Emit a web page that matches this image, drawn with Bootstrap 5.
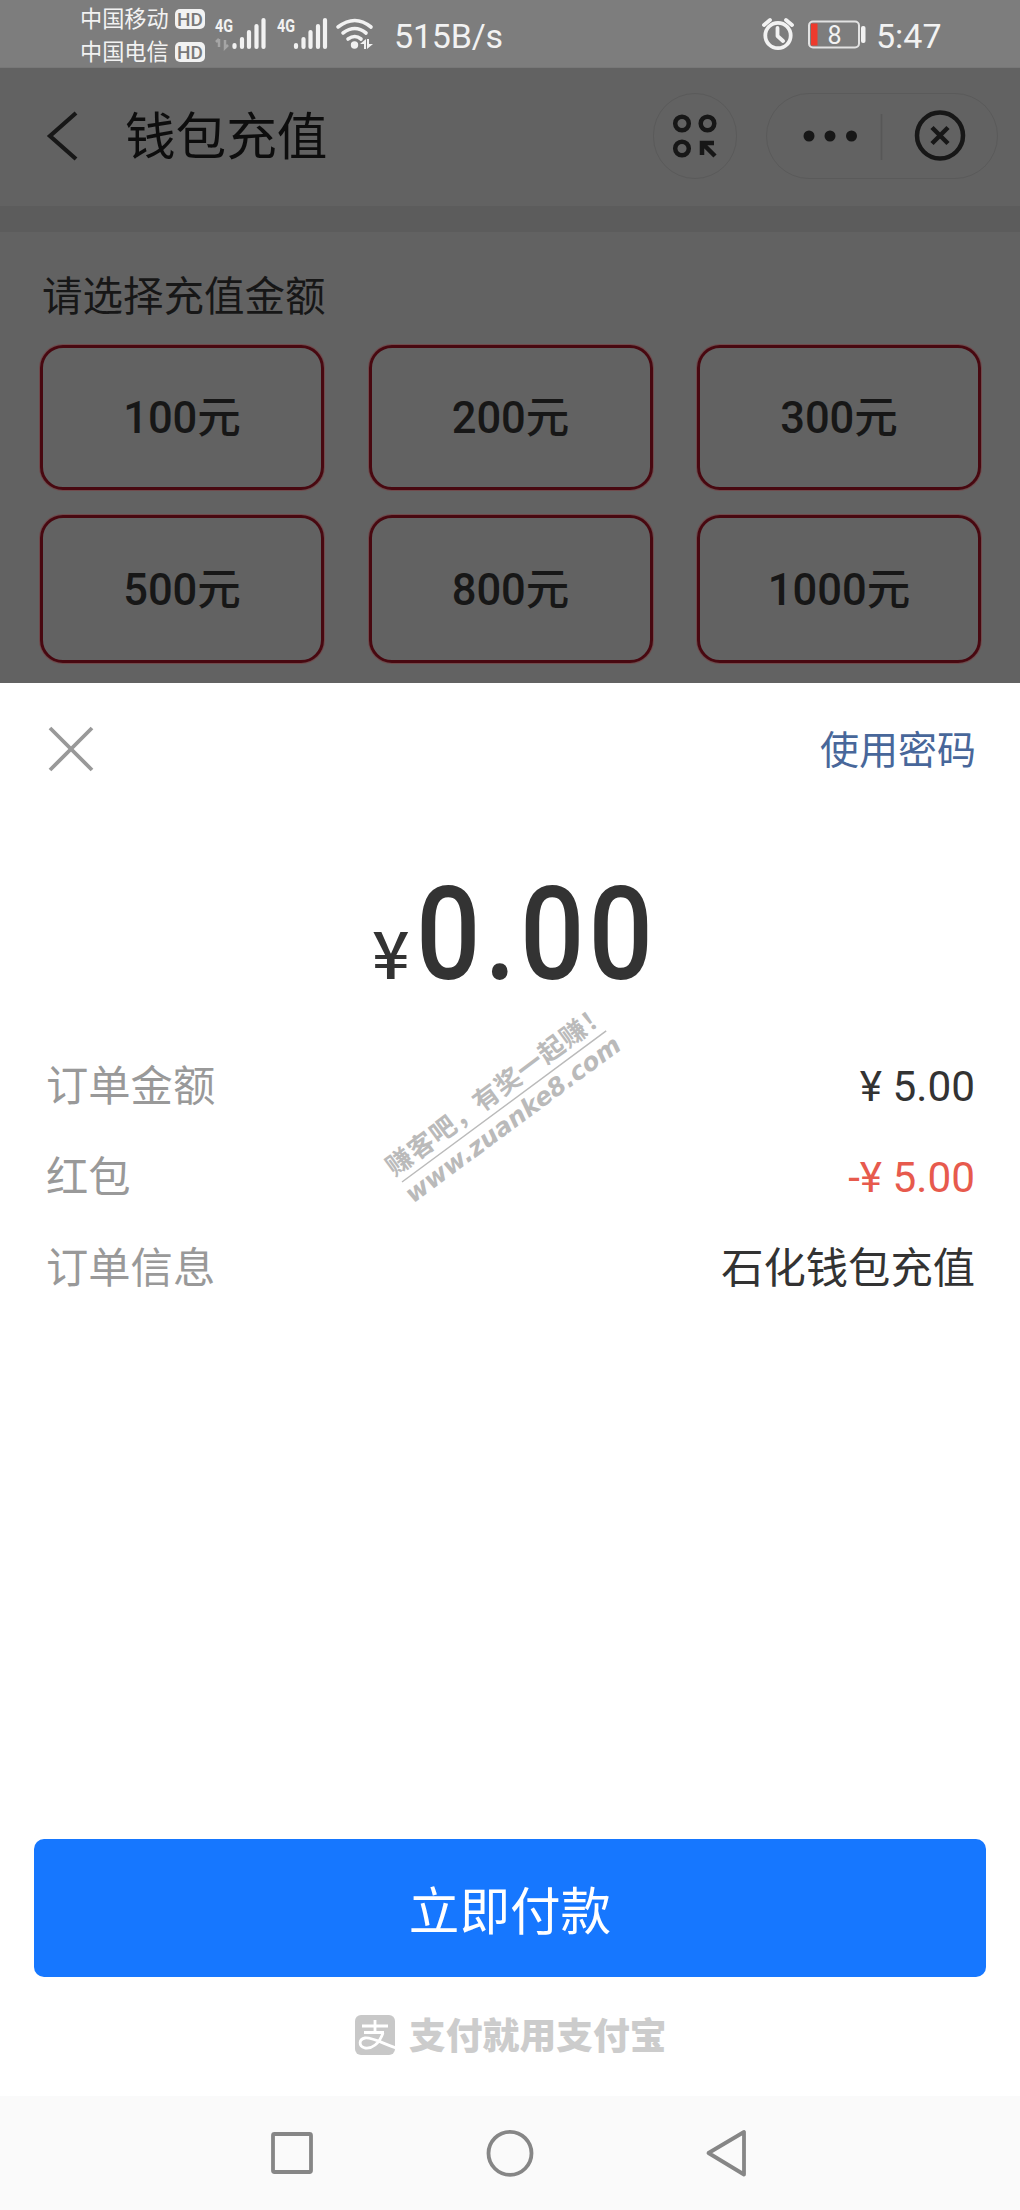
<!DOCTYPE html>
<html lang="zh-CN">
<head>
<meta charset="utf-8">
<meta name="viewport" content="width=device-width, initial-scale=1">
<title>钱包充值</title>
<link href="https://cdn.jsdelivr.net/npm/bootstrap@5.3.0/dist/css/bootstrap.min.css" rel="stylesheet">
<style>
body{width:1020px;height:2210px;overflow:hidden;background:#fff;font-family:Roboto,"Noto Sans CJK SC",sans-serif;color:#333}
svg{display:block;flex:none}
.statusbar{height:68px;background:#7d7d7d;color:#f2f2f2;padding-left:80px;border-bottom:1px solid #777}
.carriers{font-size:22.2px;line-height:33px;width:125px;padding-top:4px}
.hd{width:30px;height:20px;border-radius:5px;background:#f2f2f2;color:#777;font-size:19px;line-height:21px;font-weight:500;text-align:center}
.stat-text{font-size:34px;line-height:64px;padding-top:4px}
.net-speed{margin-left:14px;letter-spacing:-.2px}
.appbar{height:138px;background:#626262;padding:0 22px 2px 44px}
.app-title{font-size:50.6px;line-height:60px;color:#0d0d0d;margin-left:45px;padding-top:3px}
.ring{width:84px;height:86px;border:1.5px solid #5a5a5a;border-radius:43px}
.capsule{width:232px;height:86px;border:1.5px solid #5a5a5a;border-radius:43px;margin-left:29px}
.band{height:26px;background:#5c5c5c}
.amounts{height:451px;background:#626262;padding:38px 39px 0 40px}
.amounts h2{font-size:40.5px;font-weight:400;line-height:54px;color:#171717;margin:0 0 21px 2px}
.amount-grid{display:grid;grid-template-columns:repeat(3,284px);grid-template-rows:145px 148px;row-gap:25px;justify-content:space-between}
.amount-btn{border:3px solid #480810;border-radius:23px;box-shadow:0 0 0 1px #71494b;background:none;color:#171717;font-size:43.5px;font-weight:500;line-height:1;padding:3px 0 0}
.sheet{height:1413px;background:#fff;padding:0 34px}
.sheet-head{height:131px;padding:0 10px 0 14px}
.pwd{font-size:39px;color:#48679a;text-decoration:none;line-height:48px;padding-top:5px}
.total{height:242.5px;padding:56px 0 0 338px;font-weight:500}
.yen{font-family:"Noto Sans CJK SC",sans-serif;font-size:66px;line-height:1;width:44px}
.sum{font-size:129px;line-height:1;letter-spacing:4.5px;transform:scaleX(.88);transform-origin:left}
.order-row{height:91px;font-size:42.3px;line-height:60px;padding:0 11px 0 12px}
.order-row dt{font-weight:400;color:#999}
.order-row dd{margin:0;color:#333}
.order-row dd.deduct{color:#e75a4d}
.pay{height:138px;border-radius:10px;background:#1677ff;border:0;font-size:50.6px;color:#fff;padding:10px 0 0;line-height:1}
.brandline{height:119px;padding:0 0 3px 320px}
.slogan{font-size:36.8px;font-weight:900;color:#ccc;line-height:44px;padding-top:3px}
.sysnav{height:114px;background:#fafafa}
.watermark{left:350px;top:970px;pointer-events:none}
</style>
</head>
<body>
<header class="statusbar d-flex align-items-center">
  <div class="carriers">
    <div class="d-flex align-items-center justify-content-between"><span>中国移动</span><span class="hd">HD</span></div>
    <div class="d-flex align-items-center justify-content-between"><span>中国电信</span><span class="hd">HD</span></div>
  </div>
  <svg width="175" height="68" viewBox="205 0 175 68" fill="#f2f2f2">
    <g font-family="Roboto,sans-serif" font-weight="700" font-size="19">
      <text x="215" y="32" textLength="18" lengthAdjust="spacingAndGlyphs">4G</text>
      <text x="277" y="32" textLength="18" lengthAdjust="spacingAndGlyphs">4G</text>
    </g>
    <g stroke="#f2f2f2" stroke-width="4.200" stroke-linecap="round">
      <path d="M234.500 45v2M242 39v8M249 32v15M256.500 26v21M263.500 20v27"/>
      <path d="M296 45v2M303.500 39v8M310.500 32v15M318 26v21M325 20v27"/>
    </g>
    <path d="M219 39v8m-3-5 3-3M225 40v8l3-3" fill="none" stroke="#a5a5a5" stroke-width="2.500"/>
    <g fill="none" stroke="#f2f2f2" stroke-width="3.600" stroke-linecap="round">
      <path d="M338 27Q355 14 371 27"/><path d="M343 33Q355 24 366 33"/><path d="M348 39Q355 34 361 39"/>
    </g>
    <circle cx="354.500" cy="45" r="3.700"/>
    <path d="M360 44l6-5v10h-2v-5zM367 39h2v5h4l-6 5z"/>
  </svg>
  <span class="stat-text net-speed">515B/s</span>
  <svg class="ms-auto" width="115" height="68" viewBox="755 0 115 68">
    <g fill="none" stroke="#f2f2f2" stroke-width="3.800" stroke-linecap="round" stroke-linejoin="round">
      <circle cx="778" cy="35.500" r="12.700"/><path d="M777.500 28v8l5.500 5M764 25l6-5M792 25l-6-5"/>
    </g>
    <rect x="809" y="21.500" width="50" height="26" rx="4" fill="none" stroke="#e2e2e2" stroke-width="2"/>
    <rect x="811" y="23.500" width="6.500" height="22" fill="#ee3a2c"/>
    <rect x="861" y="26" width="4.500" height="17" rx="2" fill="#f2f2f2"/>
    <text x="834.500" y="43.500" text-anchor="middle" font-family="Roboto,sans-serif" font-size="25" fill="#f2f2f2">8</text>
  </svg>
  <span class="stat-text" style="width:71px;margin-left:6px;margin-right:73px">5:47</span>
</header>

<nav class="appbar d-flex align-items-center">
  <svg width="36" height="54" viewBox="44 108 36 54"><path d="M76 112 50 135 76 158" fill="none" stroke="#171717" stroke-width="4.200"/></svg>
  <div class="app-title">钱包充值</div>
  <div class="ring ms-auto d-flex align-items-center justify-content-center">
    <svg width="46" height="46" viewBox="672 112 46 46" fill="none" stroke="#171717" stroke-width="4.500">
      <circle cx="682" cy="122.500" r="6.800"/><circle cx="707.500" cy="122.500" r="6.800"/><circle cx="682" cy="147.500" r="6.800"/>
      <path d="M702 154v-12h12M702.500 142.500 715 155"/>
    </svg>
  </div>
  <div class="capsule d-flex align-items-center justify-content-center">
    <svg width="229" height="60" viewBox="767.500 105 229 60">
      <g fill="#171717"><circle cx="808.500" cy="135" r="5.500"/><circle cx="829.500" cy="135" r="5.500"/><circle cx="851" cy="135" r="5.500"/></g>
      <path d="M881 113v46" stroke="#575757" stroke-width="1.500"/>
      <circle cx="939.500" cy="134.500" r="23" fill="none" stroke="#171717" stroke-width="4.500"/>
      <path d="M931.500 126.500l16 16m0-16-16 16" stroke="#171717" stroke-width="4.500"/>
    </svg>
  </div>
</nav>
<div class="band"></div>

<main>
  <section class="amounts">
    <h2>请选择充值金额</h2>
    <div class="amount-grid">
      <button class="amount-btn">100元</button>
      <button class="amount-btn">200元</button>
      <button class="amount-btn">300元</button>
      <button class="amount-btn">500元</button>
      <button class="amount-btn">800元</button>
      <button class="amount-btn">1000元</button>
    </div>
  </section>

  <section class="sheet d-flex flex-column">
    <div class="sheet-head d-flex align-items-center justify-content-between">
      <svg width="46" height="46" viewBox="0 0 46 46"><path d="M2 2 44 44M44 2 2 44" stroke="#999" stroke-width="3.800"/></svg>
      <a href="#" class="pwd">使用密码</a>
    </div>
    <div class="total d-flex align-items-baseline">
      <span class="yen">¥</span><span class="sum">0.00</span>
    </div>
    <dl class="mb-0">
      <div class="order-row d-flex justify-content-between"><dt>订单金额</dt><dd>¥ 5.00</dd></div>
      <div class="order-row d-flex justify-content-between"><dt>红包</dt><dd class="deduct">-¥ 5.00</dd></div>
      <div class="order-row d-flex justify-content-between"><dt>订单信息</dt><dd>石化钱包充值</dd></div>
    </dl>
    <div class="mt-auto">
      <button class="pay w-100">立即付款</button>
      <div class="brandline d-flex align-items-center">
        <svg width="43" height="41" viewBox="0 0 43 41">
          <rect x="1" width="40" height="40" rx="6" fill="#c8c8c8"/>
          <g fill="none" stroke="#fff" stroke-width="2.800">
            <path d="M8 11h26M21 5v12M10 17.500h20"/>
            <path d="M29 18C25 29 18 34 11 33 4 31 5 24 11 23 18 22 30 29 42 33"/>
          </g>
        </svg>
        <span class="slogan ms-2 ps-1">支付就用支付宝</span>
      </div>
    </div>
  </section>
</main>

<footer class="sysnav">
  <svg width="1020" height="114" viewBox="0 2096 1020 114" fill="none" stroke="#868686" stroke-width="3.800" stroke-linejoin="round">
    <rect x="273" y="2134" width="38" height="38" rx="1.500"/>
    <circle cx="510" cy="2153.300" r="21.500"/>
    <path d="M708.500 2153 744 2132v42.500z"/>
  </svg>
</footer>

<svg class="watermark position-absolute" width="320" height="270" viewBox="350 970 320 270" fill="#bababa">
  <g transform="translate(402 1182) rotate(-36.500)">
    <text x="-3 24 51 78 105 132 159 186 213 240" y="-8.500" font-family="Noto Sans CJK SC,sans-serif" font-weight="700" font-size="26">赚客吧，有奖一起赚！</text>
    <path d="M0 0H254" stroke="#bababa" stroke-width="1.500"/>
    <text x="-4" y="24" font-family="DejaVu Sans,sans-serif" font-weight="700" font-style="italic" font-size="25" textLength="261" lengthAdjust="spacingAndGlyphs">www.zuanke8.com</text>
  </g>
</svg>
<script src="https://cdn.jsdelivr.net/npm/bootstrap@5.3.0/dist/js/bootstrap.bundle.min.js"></script>
</body>
</html>
